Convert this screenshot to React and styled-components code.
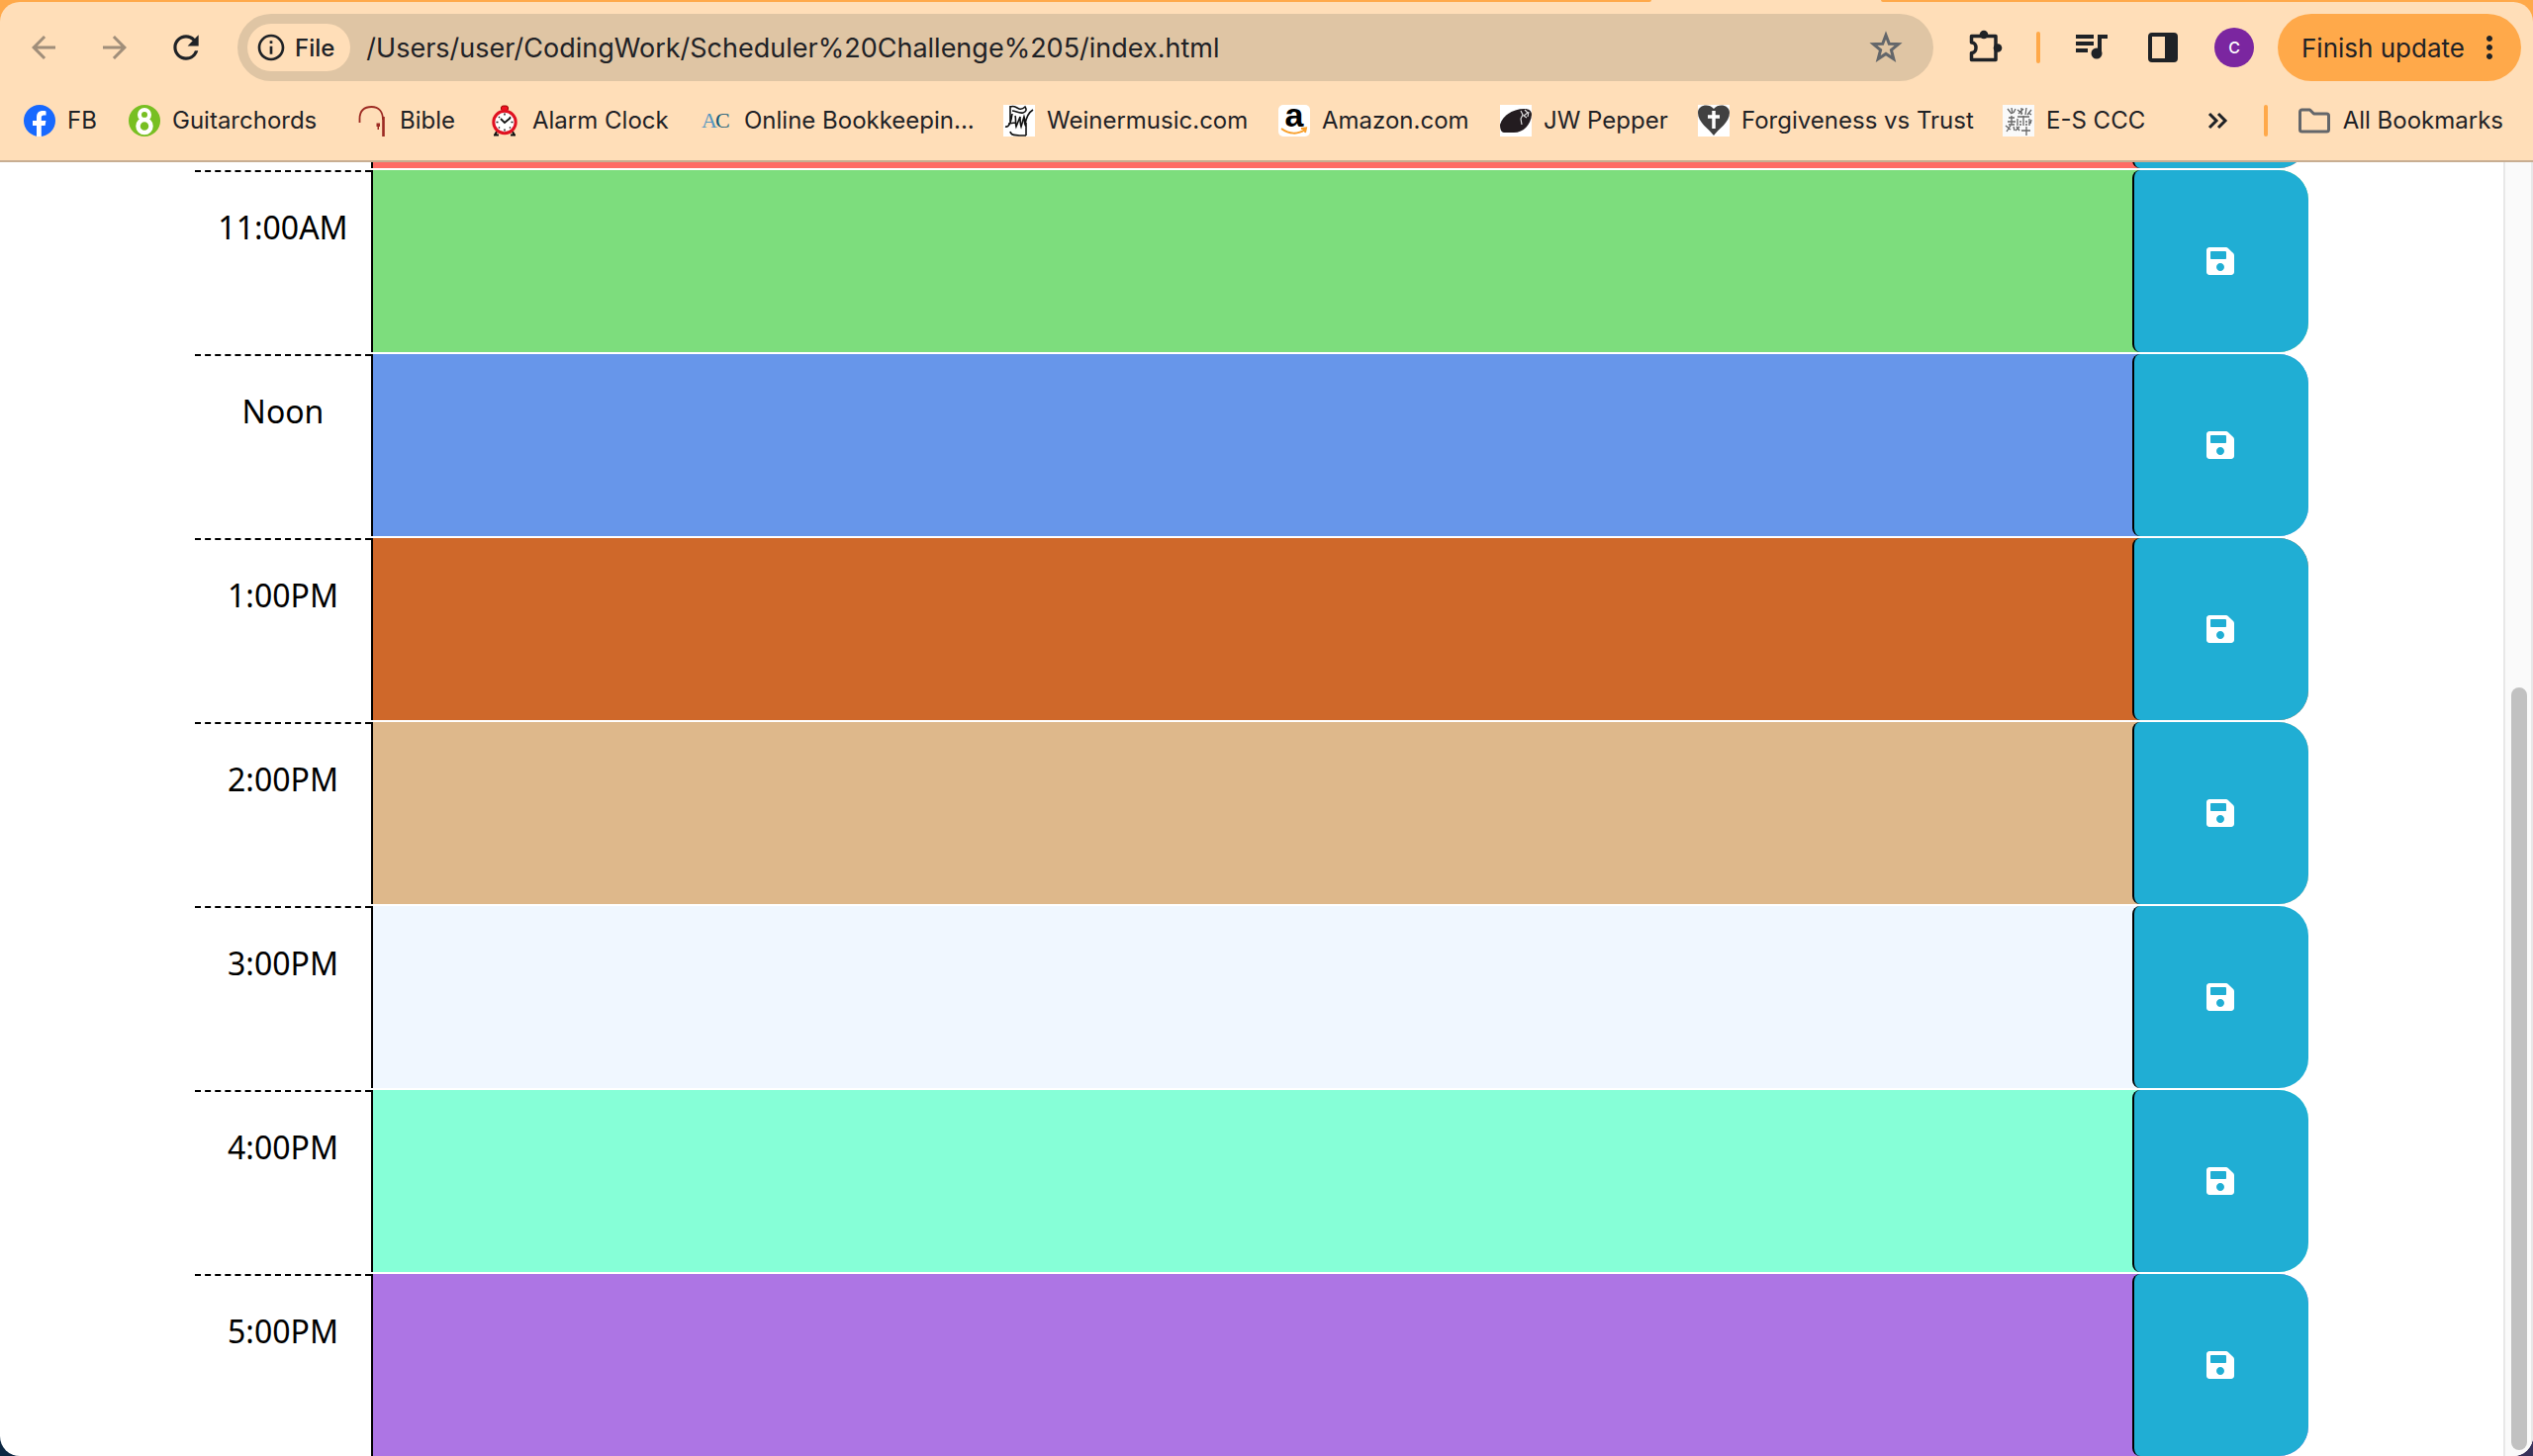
import React from 'react';
import styled, { createGlobalStyle } from 'styled-components';
import { FaSave } from 'react-icons/fa';
import { MdArrowBack, MdArrowForward, MdRefresh, MdInfoOutline, MdMoreVert } from 'react-icons/md';

const ink = '#1f2226';
const cream = '#ffdeb8';
const amber = '#ffa94a';

const GlobalStyle = createGlobalStyle`
  * { box-sizing: border-box; }
  body { margin: 0; background: linear-gradient(90deg, #0c2742 50%, #37325a 50%); font-family: Inter, "Liberation Sans", sans-serif; }
  button, input, textarea { font: inherit; }
`;

const Window = styled.div`
  display: flex;
  flex-direction: column;
  height: 100vh;
  overflow: hidden;
  background: #fff;
  border-radius: 0 0 20px 20px;
`;

const Chrome = styled.header`
  flex: none;
  background: ${amber};
  color: ${ink};
`;

const TabStrip = styled.div`
  display: grid;
  grid-template-columns: 167fr 232px 66fr;
  height: 2px;
  background: ${cream};
`;

const TabGap = styled.span`
  background: ${amber};
  border-radius: ${(p) => (p.$end ? '0 0 0 8px' : '0 0 8px 0')};
  grid-column: ${(p) => (p.$end ? 3 : 1)};
`;

const Panel = styled.div`
  background: ${cream};
  border-bottom: 2px solid #c8ae92;
  border-radius: 20px 20px 0 0;
  padding-bottom: 12px;
`;

const Toolbar = styled.div`
  display: flex;
  align-items: center;
  padding: 12px 12px 0 24px;
`;

const ToolButton = styled.button`
  display: flex;
  align-items: center;
  justify-content: center;
  width: ${(p) => (p.$compact ? 32 : 40)}px;
  height: 40px;
  padding: 0;
  border: 0;
  background: none;
  color: ${ink};
  opacity: ${(p) => (p.disabled ? 0.42 : 1)};
  svg { display: block; flex: none; }
`;

const NavGroup = styled.nav`
  display: flex;
  gap: 32px;
  margin-right: 32px;
`;

const ActionGroup = styled.div`
  display: flex;
  align-items: center;
  gap: 32px;
  margin: 0 24px 0 32px;
`;

const Omnibox = styled.div`
  flex: 1;
  display: flex;
  align-items: center;
  height: 68px;
  padding: 0 28px 0 10px;
  border-radius: 34px;
  background: #dfc5a4;
`;

const Chip = styled.button`
  display: flex;
  align-items: center;
  gap: 8px;
  height: 48px;
  padding: 0 16px 0 8px;
  border: 0;
  border-radius: 24px;
  background: ${cream};
  color: ${ink};
  font-size: 24px;
  font-weight: 500;
`;

const Address = styled.input`
  flex: 1;
  min-width: 0;
  height: 48px;
  margin-left: 16px;
  padding: 0;
  border: 0;
  outline: 0;
  background: none;
  color: ${ink};
  font-size: 27px;
`;

const Divider = styled.span`
  width: 4px;
  height: 32px;
  border-radius: 2px;
  background: ${amber};
`;

const Avatar = styled.button`
  width: 40px;
  height: 40px;
  padding: 0;
  border: 0;
  border-radius: 50%;
  background: #7b26a0;
  color: #fff;
  font-size: 16px;
  font-weight: 500;
`;

const UpdateButton = styled.button`
  display: flex;
  align-items: center;
  justify-content: space-between;
  width: 246px;
  height: 68px;
  padding: 0 14px 0 24px;
  border: 0;
  border-radius: 34px;
  background: ${amber};
  color: ${ink};
  font-size: 26px;
  white-space: nowrap;
`;

const BookmarkBar = styled.div`
  display: flex;
  align-items: center;
  height: 56px;
  margin-top: 12px;
  padding: 0 30px 0 24px;
  font-size: 24px;
  line-height: 32px;
`;

const Bookmark = styled.a`
  display: flex;
  align-items: center;
  gap: 12px;
  flex: none;
  width: ${(p) => (p.$width ? `${p.$width}px` : 'auto')};
  color: ${ink};
  text-decoration: none;
  white-space: nowrap;
  svg { flex: none; display: block; }
`;

const BarEnd = styled.div`
  display: flex;
  align-items: center;
  gap: 30px;
  margin-left: auto;
`;

const Viewport = styled.main`
  flex: 1;
  min-height: 0;
  display: grid;
  grid-template-columns: 1fr 30px;
`;

const Schedule = styled.div`
  display: flex;
  flex-direction: column;
  justify-content: flex-end;
  gap: 2px;
  min-height: 0;
  overflow: hidden;
  padding: 0 197px;
`;

const TimeBlock = styled.section`
  flex: none;
  display: grid;
  grid-template-columns: 1fr 10fr 1fr;
  height: 184px;
  border-radius: 0 30px 30px 0;
  background: ${(p) => p.$color};
`;

const Hour = styled.label`
  padding-top: 32px;
  border-top: 2px dashed #000;
  background: #fff;
  color: #000;
  font-family: "Noto Sans", "Open Sans", sans-serif;
  font-size: 32px;
  line-height: 48px;
  text-align: center;
`;

const Notes = styled.textarea`
  display: block;
  width: 100%;
  height: 100%;
  padding: 12px;
  border: 0;
  border-left: 2px solid #000;
  outline: 0;
  resize: none;
  background: transparent;
  color: #000;
`;

const SaveButton = styled.button`
  display: flex;
  align-items: center;
  justify-content: center;
  padding: 0 2px 0 0;
  border: 0;
  border-left: 2px solid #000;
  border-radius: 8px 30px 30px 8px;
  background: #20aed4;
  color: #fff;
  font-size: 32px;
`;

const ScrollTrack = styled.div`
  display: grid;
  grid-template-rows: 531fr 771fr;
  padding: 0 4px 6px 6px;
  border: solid #e8e8e8;
  border-width: 0 2px;
  background: #fafafa;
`;

const ScrollThumb = styled.div`
  grid-row: 2;
  border-radius: 8px;
  background: #c1c1c1;
`;

const Icon = ({ size = 32, box = 32, children }) => (
  <svg width={size} height={size} viewBox={`0 0 ${box} ${box}`} aria-hidden="true">{children}</svg>
);

const Facebook = () => (
  <Icon>
    <circle cx="16" cy="16" r="16" fill="#1769ff" />
    <path d="M13 32V21H9v-5h4v-3.500c0-4.500 2.500-6.500 6.200-6.500 1.300 0 2.600.2 3.300.4v4h-2.200c-2 0-2.500 1-2.500 2.400V16h4.600l-.8 5h-3.800v11z" fill="#fff" />
  </Icon>
);

const Guitarchords = () => (
  <Icon>
    <circle cx="16" cy="16" r="16" fill="#78bf22" />
    <circle cx="16" cy="10" r="5" fill="none" stroke="#fff" strokeWidth="4" />
    <circle cx="16" cy="21.500" r="6.500" fill="none" stroke="#fff" strokeWidth="4.500" />
  </Icon>
);

const Bible = () => (
  <Icon>
    <path d="M3.500 18v-4C3.500 6 8 2 15.500 2S27 7 27 15" fill="none" stroke="#9c2a22" strokeWidth="1.800" />
    <path d="M27.500 12v20" stroke="#9c2a22" strokeWidth="2.600" />
    <path d="M20.500 18.500h3.500v3.500h-1v3h-1.500v-3h-1z" fill="#9c2a22" />
  </Icon>
);

const AlarmClock = () => (
  <Icon>
    <path d="M8 27l-2 4M24 27l2 4M5 30.500h5M22 30.500h5" stroke="#111" strokeWidth="2" />
    <rect x="12.500" y="1" width="7" height="5" rx="2" fill="#f01020" stroke="#900" />
    <circle cx="16" cy="17.500" r="11.200" fill="#fff" stroke="#e01020" strokeWidth="3" />
    <path d="M16 8.500v2M16 24.500v2M7.500 17.500h2M22.500 17.500h2M10 12l1 1M10 23.500l1-1M22 23.500l-1-1M22 12l-1 1" stroke="#222" strokeWidth="1.500" />
    <path d="M12 14l4 4 6-5" fill="none" stroke="#111" strokeWidth="1.800" />
  </Icon>
);

const Accounting = () => (
  <Icon>
    <text x="1" y="23" fontFamily="Liberation Serif, serif" fontSize="22" fill="#5295c0">A</text>
    <text x="15" y="23" fontFamily="Liberation Serif, serif" fontSize="22" fill="#0d5878">C</text>
  </Icon>
);

const Weiner = () => (
  <Icon>
    <path d="M0 0h32v32H0z" fill="#fff" />
    <path d="M7 1v16M7 2c4-2 6 1 9 2s5-1 6-2c2 3 1 5-2 6M9 6c4 0 6 3 11 2M2 22c4 1 6-5 7-13M5 19l7-1M12 11c1 3 0 7 1 11l4-10c0 4 0 7 1 10l3-10c1 3 0 6 1 8 1-7 3-12 8-15M23 18v13M7 27c1 5 6 3 9 4h7" fill="none" stroke="#111" strokeWidth="1.600" />
  </Icon>
);

const Amazon = () => (
  <Icon>
    <rect width="32" height="32" rx="5" fill="#fff" />
    <text x="16" y="22" textAnchor="middle" fontFamily="Liberation Sans, sans-serif" fontWeight="700" fontSize="34" fill="#000">a</text>
    <path d="M3 24c8 6 17 6 24 1M23 24l5-.5-1 4.500" fill="none" stroke="#f9a02c" strokeWidth="2" />
  </Icon>
);

const Pepper = () => (
  <Icon>
    <path d="M0 0h32v32H0z" fill="#fff" />
    <path d="M0 20C3 11 12 4 25 4c4 0 7 2 7 6-1 10-8 18-18 18H4c-3 0-4-4-4-8z" fill="#231c20" />
    <path d="M21 6l2 4-2 4 1 6M25 5l3 3-4 3 3 2M29 7l-1 5" fill="none" stroke="#ddd" strokeWidth="1.200" />
  </Icon>
);

const HeartCross = () => (
  <Icon>
    <path d="M0 0h32v32H0z" fill="#fff" />
    <path d="M16 31C11 24 0 18 0 8 0 0 11-2 16 4c5-6 16-4 16 4 0 10-11 16-16 23z" fill="#414141" />
    <path d="M16 6v18M10 12h12" stroke="#fff" strokeWidth="3.500" />
  </Icon>
);

const Sketch = () => (
  <Icon>
    <path d="M0 0h32v32H0z" fill="#fafafa" />
    <path d="M5 4l4 5M9 3l1 6M13 4l-2 4M15 5l5 4M16 9l5-5M19 3v7M24 3l-1 7M29 5l-4 5M26 8l3 2M6 13h6M5 17h8M9 11v9M6 20h6M15 12h12M15 14v7M21 11v10M27 14v7M17 17h2M23 17h2M17 20h2M23 20h2M3 21l5 4M8 21l-4 6M11 22l1 4M14 22l3 4M17 22l-4 4M19 26h9M24 22v9M29 15l-1 4" fill="none" stroke="#666" strokeWidth="1.300" />
  </Icon>
);

const Star = () => (
  <Icon size={34} box={34}>
    <path d="M17 4.500l3.300 8.700 9.300.4-7.200 5.900 2.400 9-7.800-5.100-7.800 5.100 2.400-9-7.200-5.900 9.300-.4z" fill="none" stroke="#63666a" strokeWidth="3" />
  </Icon>
);

const Puzzle = () => (
  <Icon size={36} box={36}>
    <path d="M4.500 6.500h24.500v24H4.500v-7c3 0 4.500-2.500 4.500-5.300S7.500 13 4.500 13z" fill="none" stroke={ink} strokeWidth="3.500" strokeLinejoin="round" />
    <circle cx="17" cy="5" r="4.300" fill={ink} />
    <circle cx="31" cy="18.500" r="4.300" fill={ink} />
  </Icon>
);

const Playlist = () => (
  <Icon>
    <path d="M0 5h18M0 12h18M0 19h12M24 21V5h8" fill="none" stroke={ink} strokeWidth="4" />
    <circle cx="21" cy="22" r="5.500" fill={ink} />
  </Icon>
);

const SidePanel = () => (
  <Icon>
    <rect x="3" y="3" width="26" height="26" rx="2" fill="none" stroke={ink} strokeWidth="4" />
    <path d="M18 3h11v26H18z" fill={ink} />
  </Icon>
);

const Folder = () => (
  <Icon size={34} box={34}>
    <path d="M2.500 8a2 2 0 0 1 2-2h8l4 4h13a2 2 0 0 1 2 2v14a2 2 0 0 1-2 2h-25a2 2 0 0 1-2-2z" fill="none" stroke="#63666a" strokeWidth="3" strokeLinejoin="round" />
  </Icon>
);

const Chevrons = () => (
  <Icon>
    <path d="M7 9l7 7-7 7M16 9l7 7-7 7" fill="none" stroke={ink} strokeWidth="3" />
  </Icon>
);

const bookmarks = [
  { name: 'FB', icon: Facebook, width: 106 },
  { name: 'Guitarchords', icon: Guitarchords, width: 230 },
  { name: 'Bible', icon: Bible, width: 134 },
  { name: 'Alarm Clock', icon: AlarmClock, width: 214 },
  { name: 'Online Bookkeepin...', icon: Accounting, width: 306 },
  { name: 'Weinermusic.com', icon: Weiner, width: 278 },
  { name: 'Amazon.com', icon: Amazon, width: 224 },
  { name: 'JW Pepper', icon: Pepper, width: 200 },
  { name: 'Forgiveness vs Trust', icon: HeartCross, width: 308 },
  { name: 'E-S CCC', icon: Sketch },
];

const blocks = [
  { id: 'hour-10', label: '', color: '#ff6b65' },
  { id: 'hour-11', label: '11:00AM', color: '#7ddd7d' },
  { id: 'hour-12', label: 'Noon', color: '#6796ea' },
  { id: 'hour-13', label: '1:00PM', color: '#cf682a' },
  { id: 'hour-14', label: '2:00PM', color: '#deb88b' },
  { id: 'hour-15', label: '3:00PM', color: '#f0f7ff' },
  { id: 'hour-16', label: '4:00PM', color: '#86ffd7' },
  { id: 'hour-17', label: '5:00PM', color: '#ad75e4' },
];

export default function App() {
  return (
    <>
      <GlobalStyle />
      <Window>
        <Chrome>
          <TabStrip>
            <TabGap />
            <TabGap $end />
          </TabStrip>
          <Panel>
            <Toolbar>
              <NavGroup>
                <ToolButton disabled aria-label="Back"><MdArrowBack size={36} /></ToolButton>
                <ToolButton disabled aria-label="Forward"><MdArrowForward size={36} /></ToolButton>
                <ToolButton aria-label="Reload"><MdRefresh size={38} /></ToolButton>
              </NavGroup>
              <Omnibox>
                <Chip><MdInfoOutline size={32} />File</Chip>
                <Address aria-label="Address" defaultValue="/Users/user/CodingWork/Scheduler%20Challenge%205/index.html" />
                <ToolButton aria-label="Bookmark this page"><Star /></ToolButton>
              </Omnibox>
              <ActionGroup>
                <ToolButton aria-label="Extensions"><Puzzle /></ToolButton>
                <Divider />
                <ToolButton aria-label="Media"><Playlist /></ToolButton>
                <ToolButton aria-label="Side panel"><SidePanel /></ToolButton>
                <Avatar>C</Avatar>
              </ActionGroup>
              <UpdateButton>Finish update<MdMoreVert size={36} /></UpdateButton>
            </Toolbar>
            <BookmarkBar>
              {bookmarks.map(({ name, icon: Favicon, width }) => (
                <Bookmark key={name} href="#" $width={width}><Favicon />{name}</Bookmark>
              ))}
              <BarEnd>
                <ToolButton $compact aria-label="More bookmarks"><Chevrons /></ToolButton>
                <Divider />
                <Bookmark href="#"><Folder />All Bookmarks</Bookmark>
              </BarEnd>
            </BookmarkBar>
          </Panel>
        </Chrome>
        <Viewport>
          <Schedule>
            {blocks.map(({ id, label, color }) => (
              <TimeBlock key={id} $color={color}>
                <Hour htmlFor={id}>{label}</Hour>
                <Notes id={id} />
                <SaveButton aria-label="Save"><FaSave /></SaveButton>
              </TimeBlock>
            ))}
          </Schedule>
          <ScrollTrack><ScrollThumb /></ScrollTrack>
        </Viewport>
      </Window>
    </>
  );
}
